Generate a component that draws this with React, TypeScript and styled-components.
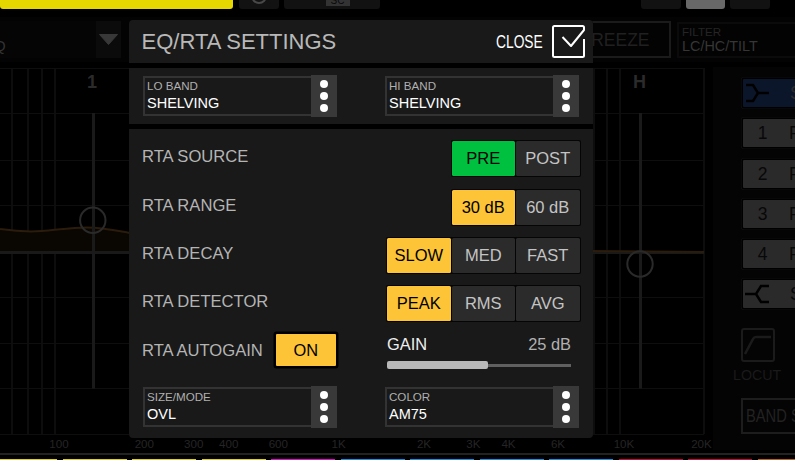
import React, { useState } from "react";
import styled, { createGlobalStyle } from "styled-components";

const GlobalStyle = createGlobalStyle`
	body {
		margin: 0;
		background: #000;
		font-family: "Liberation Sans", Arial, sans-serif;
	}

	* {
		box-sizing: border-box;
	}
`;

const Screen = styled.div`
	position: relative;
	display: flex;
	flex-direction: column;
	width: 795px;
	height: 460px;
	overflow: hidden;
	background: #000;
	user-select: none;
`;

/* ---------- top strip ---------- */

const TabStrip = styled.div`
	display: flex;
	flex: none;
	height: 8px;
`;

const Tab = styled.div<{ $width: number; $color?: string; $gap?: number }>`
	display: flex;
	justify-content: center;
	flex: none;
	width: ${p => p.$width}px;
	height: 8.5px;
	margin-left: ${p => p.$gap ?? 5}px;
	border-radius: 0 0 3px 3px;
	background: ${p => p.$color || "#121212"};
	overflow: hidden;
`;

const SideChain = styled.div`
	width: 24px;
	height: 6px;
	margin-left: 11px;
	background: #333;
	color: #0a0a0a;
	font-size: 10px;
	line-height: 1px;
	text-align: center;
`;

/* ---------- toolbar ---------- */

const Toolbar = styled.div`
	display: flex;
	flex: none;
	align-items: center;
	height: 45px;
	margin-top: 9px;
	background: #030303;
`;

const ModePicker = styled.div`
	display: flex;
	justify-content: space-between;
	width: 121px;
	height: 37px;
	background: #050505;
`;

const ModeText = styled.div`
	margin-left: -6px;
	padding-top: 4px;
	color: #333;
	font-size: 15px;
	line-height: 17px;

	small {
		display: block;
		height: 12px;
		color: #222;
		font-size: 11px;
		line-height: 12px;
	}
`;

const ModeArrow = styled.div`
	display: flex;
	justify-content: center;
	width: 25px;
	padding-top: 12px;
	background: #0b0b0b;
`;

const FreezeButton = styled.div`
	width: 111px;
	height: 37px;
	margin-left: auto;
	border: 2px solid #1b1b1b;
	color: #202020;
	font-size: 17.5px;
	line-height: 34px;
	padding-left: 18.5px;
`;

const FilterBox = styled.div`
	width: 118px;
	height: 36px;
	margin-left: 6px;
	padding: 2px 0 0 3px;
	border: 2px solid #0b0b0b;
	border-right: 0;
	color: #363636;
	font-size: 14.4px;
	line-height: 17px;

	small {
		display: block;
		color: #252525;
		font-size: 11.6px;
		line-height: 12px;
	}
`;

/* ---------- main area ---------- */

const Main = styled.div`
	display: flex;
	flex: none;
	height: 383px;
	margin-top: 5px;
`;

const SidePanel = styled.div`
	display: flex;
	flex-direction: column;
	width: 82px;
	padding: 12px 0 0 30px;
	background: #040404;
	overflow: hidden;
`;

const BandButton = styled.div<{ $active?: boolean }>`
	display: flex;
	flex: none;
	align-items: center;
	width: 80px;
	height: 28px;
	margin-bottom: 12.3px;
	border-radius: 1px;
	background: ${p => (p.$active ? "#0c162b" : "#2a2a2a")};
	box-shadow: 0 0 0 1.5px #000, 0 0 0 2px #111;
	color: ${p => (p.$active ? "#2b2b2b" : "#080808")};
	font-size: 17.5px;
	line-height: 28px;
`;

const BandNumber = styled.span`
	width: 39px;
	margin-right: 7px;
	text-align: center;
`;

const BandIcon = styled.svg`
	flex: none;
	margin-right: 20px;
`;

const LoCut = styled.div`
	width: 60px;
	margin: 7.5px 0 0 -10px;
	color: #1a1a1a;
	font-size: 14.2px;
	line-height: 16px;

	svg {
		display: block;
		margin: 0 0 5px 8px;
	}
`;

const BandSelect = styled.div`
	width: 90px;
	height: 36px;
	flex: none;
	margin: 15px 0 0 -2px;
	padding-left: 3px;
	border: 2px solid #1d1d1d;
	color: #222;
	font-size: 17.5px;
	line-height: 33px;
	white-space: nowrap;

	span {
		display: inline-block;
		transform: scaleX(0.84);
		transform-origin: left;
	}
`;

const Divider = styled.div`
	flex: none;
	height: 2px;
	margin-top: 3px;
	background: #222;
`;

const ChannelStrip = styled.div`
	display: flex;
	gap: 5.5px;
	height: 1px;
	margin: 4px 0 0 -7px;
`;

const Channel = styled.div<{ $color: string }>`
	flex: none;
	width: 64px;
	height: 1px;
	background: ${p => p.$color};
`;

/* ---------- settings dialog ---------- */

const Dialog = styled.div`
	position: absolute;
	left: 129px;
	top: 20px;
	display: flex;
	flex-direction: column;
	gap: 5px;
	width: 463.5px;
	height: 418px;
	border-radius: 4px;
	background: #000;
	overflow: hidden;
`;

const DialogHeader = styled.div`
	display: flex;
	align-items: center;
	height: 43px;
	padding: 0 8px 0 12.5px;
	background: #191919;
`;

const Title = styled.div`
	color: #b8b8b8;
	font-size: 22px;
	line-height: 43px;
`;

const CloseButton = styled.div`
	display: flex;
	align-items: center;
	margin-left: auto;
	color: #fff;
`;

const CloseLabel = styled.span`
	width: 55.5px;
	font-size: 18.4px;
	line-height: 43px;

	span {
		display: inline-block;
		transform: scaleX(0.75);
		transform-origin: left;
	}
`;

const BandRow = styled.div`
	display: flex;
	gap: 48px;
	height: 56px;
	padding: 7px 0 0 14px;
	background: #191919;
`;

const DialogBody = styled.div`
	flex: 1;
	padding: 11.2px 12px 0 13px;
	background: #191919;
`;

const Picker = styled.div`
	display: flex;
	align-items: center;
	width: 194px;
	height: 42px;
`;

const PickerText = styled.div`
	flex: 1;
	height: 40px;
	padding: 1px 0 0 2px;
	border: 2px solid #333;
	border-right: 0;
	color: #fff;
	font-size: 14.5px;
	line-height: 20px;
	white-space: nowrap;

	small {
		display: block;
		color: #b0b0b0;
		font-size: 11.6px;
		line-height: 14px;
	}
`;

const PickerHandle = styled.div`
	display: flex;
	flex-direction: column;
	align-items: center;
	justify-content: center;
	gap: 4px;
	width: 26px;
	height: 42px;
	background: #393939;

	i {
		width: 8px;
		height: 8px;
		border-radius: 50%;
		background: #fff;
	}
`;

const SettingRow = styled.div`
	display: flex;
	justify-content: space-between;
	height: 48.4px;
`;

const SettingLabel = styled.div`
	color: #b4b4b4;
	font-size: 16.6px;
	line-height: 34px;
	white-space: nowrap;
`;

const Segments = styled.div`
	display: flex;
	gap: 1px;
	height: 37px;
	padding: 1px;
	border-radius: 2px;
	background: #050505;
`;

const Segment = styled.div<{ $fill?: string }>`
	width: 63.5px;
	border-radius: 1.5px;
	background: ${p => p.$fill || "#2b2b2b"};
	color: ${p => (p.$fill ? "#000" : "#c4c4c4")};
	font-size: 16.5px;
	line-height: 34.6px;
	text-align: center;
	cursor: pointer;
`;

const GainRow = styled.div`
	display: flex;
	height: 51.8px;
`;

const OnButton = styled.div`
	width: 60px;
	height: 32px;
	margin-left: 13px;
	background: #fcc436;
	box-shadow: 0 0 0 2.5px #000;
	border-radius: 1px;
	color: #000;
	font-size: 16.4px;
	line-height: 32px;
	text-align: center;
`;

const Gain = styled.div`
	width: 184px;
	margin: -5px 9.5px 0 auto;
`;

const GainHead = styled.div`
	display: flex;
	justify-content: space-between;
	color: #eee;
	font-size: 16.4px;
	line-height: 30px;

	span:last-child {
		color: #b0b0b0;
	}
`;

const GainTrack = styled.div`
	display: flex;
	align-items: center;
	height: 9px;
	margin-top: 2px;
	background: linear-gradient(#606060, #606060) center / 100% 3px no-repeat;
`;

const GainFill = styled.div`
	height: 8px;
	border-radius: 2px;
	background: #b8b8b8;
`;

const PickerRow = styled.div`
	display: flex;
	gap: 48px;
	padding-left: 1px;
`;

const YELLOW = "#fcc436";
const GREEN = "#00c040";

const channels = [
	...Array(4).fill("#e0d300"),
	"#f400dc",
	"#0a94f0",
	"#0a94f0",
	"#0a94f0",
	"#0a94f0",
	"#dc0040",
	"#dc0040",
	"#c06010"
];

const ticks: [string, number][] = [
	["100", 59],
	["200", 144.3],
	["300", 193.7],
	["400", 228.7],
	["600", 278.3],
	["1K", 338.7],
	["2K", 424],
	["3K", 473.3],
	["4K", 508.5],
	["6K", 558],
	["10K", 624],
	["20K", 701.5]
];

const EqChart = () => (
	<svg width="713" height="383" viewBox="0 67 713 383">
		<g stroke="#0d0d0d" strokeWidth="2">
			{[12, 28, 42, 55, 594, 607, 620, 704].map(x => (
				<path key={x} d={`M${x} 68V434`} />
			))}
		</g>
		<g stroke="#0e0e0e">
			{[68.5, 113.5, 160.5, 205.5, 297.5, 343.5, 388.5, 434.5].map(y => (
				<path key={y} d={`M0 ${y}H704`} />
			))}
		</g>
		<path
			d="M0 229C14 231 28 232 42 231S72 227.5 87 227.5S114 230 130 233V252H0Z"
			fill="#0a0602"
		/>
		<path
			d="M0 229C14 231 28 232 42 231S72 227.5 87 227.5S114 230 130 233"
			fill="none"
			stroke="#2b1c0b"
			strokeWidth="2"
		/>
		<path d="M0 252.5H704" stroke="#191919" strokeWidth="3" />
		<path d="M592 251L704 252" stroke="#2b1c0b" strokeWidth="2" />
		<path d="M93.5 113V388.5M640.5 113V388.5" stroke="#1a1a1a" strokeWidth="3" />
		<g fill="none" stroke="#2a2a2a" strokeWidth="2">
			<circle cx="92.8" cy="220.3" r="12.7" />
			<circle cx="640" cy="264" r="12.7" />
		</g>
		<g fill="#2b2b2b" fontSize="18" fontWeight="bold" textAnchor="middle">
			<text x="92" y="88">1</text>
			<text x="639.5" y="88">H</text>
		</g>
		<g fill="#252525" fontSize="11.6" textAnchor="middle">
			{ticks.map(([label, x]) => (
				<text key={label} x={x} y="448">
					{label}
				</text>
			))}
		</g>
	</svg>
);

interface DropPickerProps {
	label: string;
	value: string;
}

const DropPicker = ({ label, value }: DropPickerProps) => (
	<Picker>
		<PickerText>
			<small>{label}</small>
			{value}
		</PickerText>
		<PickerHandle>
			<i />
			<i />
			<i />
		</PickerHandle>
	</Picker>
);

interface SettingProps {
	label: string;
	options: string[];
	fill?: string;
}

const Setting = ({ label, options, fill = YELLOW }: SettingProps) => {
	const [selected, setSelected] = useState(0);

	return (
		<SettingRow>
			<SettingLabel>{label}</SettingLabel>
			<Segments>
				{options.map((option, i) => (
					<Segment
						key={option}
						$fill={i === selected ? fill : undefined}
						onClick={() => setSelected(i)}
					>
						{option}
					</Segment>
				))}
			</Segments>
		</SettingRow>
	);
};

const SettingsDialog = () => {
	const gain = 55;

	return (
		<Dialog>
			<DialogHeader>
				<Title>EQ/RTA SETTINGS</Title>
				<CloseButton>
					<CloseLabel>
						<span>CLOSE</span>
					</CloseLabel>
					<svg width="33" height="33" fill="none" stroke="#fff" strokeWidth="2">
						<path
							d="M32 14V30.5Q32 32 30.5 32H2.5Q1 32 1 30.5V2.5Q1 1 2.5 1H30.5Q32 1 32 2.5V5L19 21L10.5 12"
							strokeLinejoin="round"
						/>
					</svg>
				</CloseButton>
			</DialogHeader>
			<BandRow>
				<DropPicker label="LO BAND" value="SHELVING" />
				<DropPicker label="HI BAND" value="SHELVING" />
			</BandRow>
			<DialogBody>
				<Setting label="RTA SOURCE" options={["PRE", "POST"]} fill={GREEN} />
				<Setting label="RTA RANGE" options={["30 dB", "60 dB"]} />
				<Setting label="RTA DECAY" options={["SLOW", "MED", "FAST"]} />
				<Setting label="RTA DETECTOR" options={["PEAK", "RMS", "AVG"]} />
				<GainRow>
					<SettingLabel>RTA AUTOGAIN</SettingLabel>
					<OnButton>ON</OnButton>
					<Gain>
						<GainHead>
							<span>GAIN</span>
							<span>25 dB</span>
						</GainHead>
						<GainTrack>
							<GainFill style={{ width: `${gain}%` }} />
						</GainTrack>
					</Gain>
				</GainRow>
				<PickerRow>
					<DropPicker label="SIZE/MODE" value="OVL" />
					<DropPicker label="COLOR" value="AM75" />
				</PickerRow>
			</DialogBody>
		</Dialog>
	);
};

const App = () => (
	<Screen>
		<GlobalStyle />
		<TabStrip>
			<Tab $width={233} $gap={0} $color="#e6d700" />
			<Tab $width={40} $gap={6}>
				<svg width="40" height="8">
					<circle cx="20" cy="-4" r="7" fill="none" stroke="#484848" strokeWidth="2" />
				</svg>
			</Tab>
			<Tab $width={96}>
				<SideChain>SC</SideChain>
			</Tab>
			<Tab $width={40} $gap={261} />
			<Tab $width={39} $color="#686868" />
			<Tab $width={40} />
		</TabStrip>
		<Toolbar>
			<ModePicker>
				<ModeText>
					<small>L</small>
					Q
				</ModeText>
				<ModeArrow>
					<svg width="21" height="13">
						<path
							d="M1.5 1.5H19.5L10.5 11.5Z"
							fill="#383838"
							stroke="#383838"
							strokeLinejoin="round"
						/>
					</svg>
				</ModeArrow>
			</ModePicker>
			<FreezeButton>FREEZE</FreezeButton>
			<FilterBox>
				<small>FILTER</small>
				LC/HC/TILT
			</FilterBox>
		</Toolbar>
		<Main>
			<EqChart />
			<SidePanel>
				<BandButton $active>
					<BandIcon width="27" height="20" fill="none" stroke="#000" strokeWidth="2.5">
						<path d="M3 2H10L15 10H26M3 18H10L15 10" />
					</BandIcon>
					S
				</BandButton>
				{[1, 2, 3, 4].map(n => (
					<BandButton key={n}>
						<BandNumber>{n}</BandNumber>P
					</BandButton>
				))}
				<BandButton>
					<BandIcon width="27" height="20" fill="none" stroke="#000" strokeWidth="2.5">
						<path d="M2 10H13L18 2H26M13 10L18 18H26" />
					</BandIcon>
					S
				</BandButton>
				<LoCut>
					<svg width="34" height="34" fill="none" stroke="#1b1b1b">
						<rect x="1" y="1" width="32" height="32" rx="2" strokeWidth="2" />
						<path d="M4 26L12 11Q13 9 15 9H30" strokeWidth="2.6" />
					</svg>
					LOCUT
				</LoCut>
				<BandSelect>
					<span>BAND S</span>
				</BandSelect>
			</SidePanel>
		</Main>
		<Divider />
		<ChannelStrip>
			{channels.map((color, i) => (
				<Channel key={i} $color={color} />
			))}
		</ChannelStrip>
		<SettingsDialog />
	</Screen>
);

export default App;
